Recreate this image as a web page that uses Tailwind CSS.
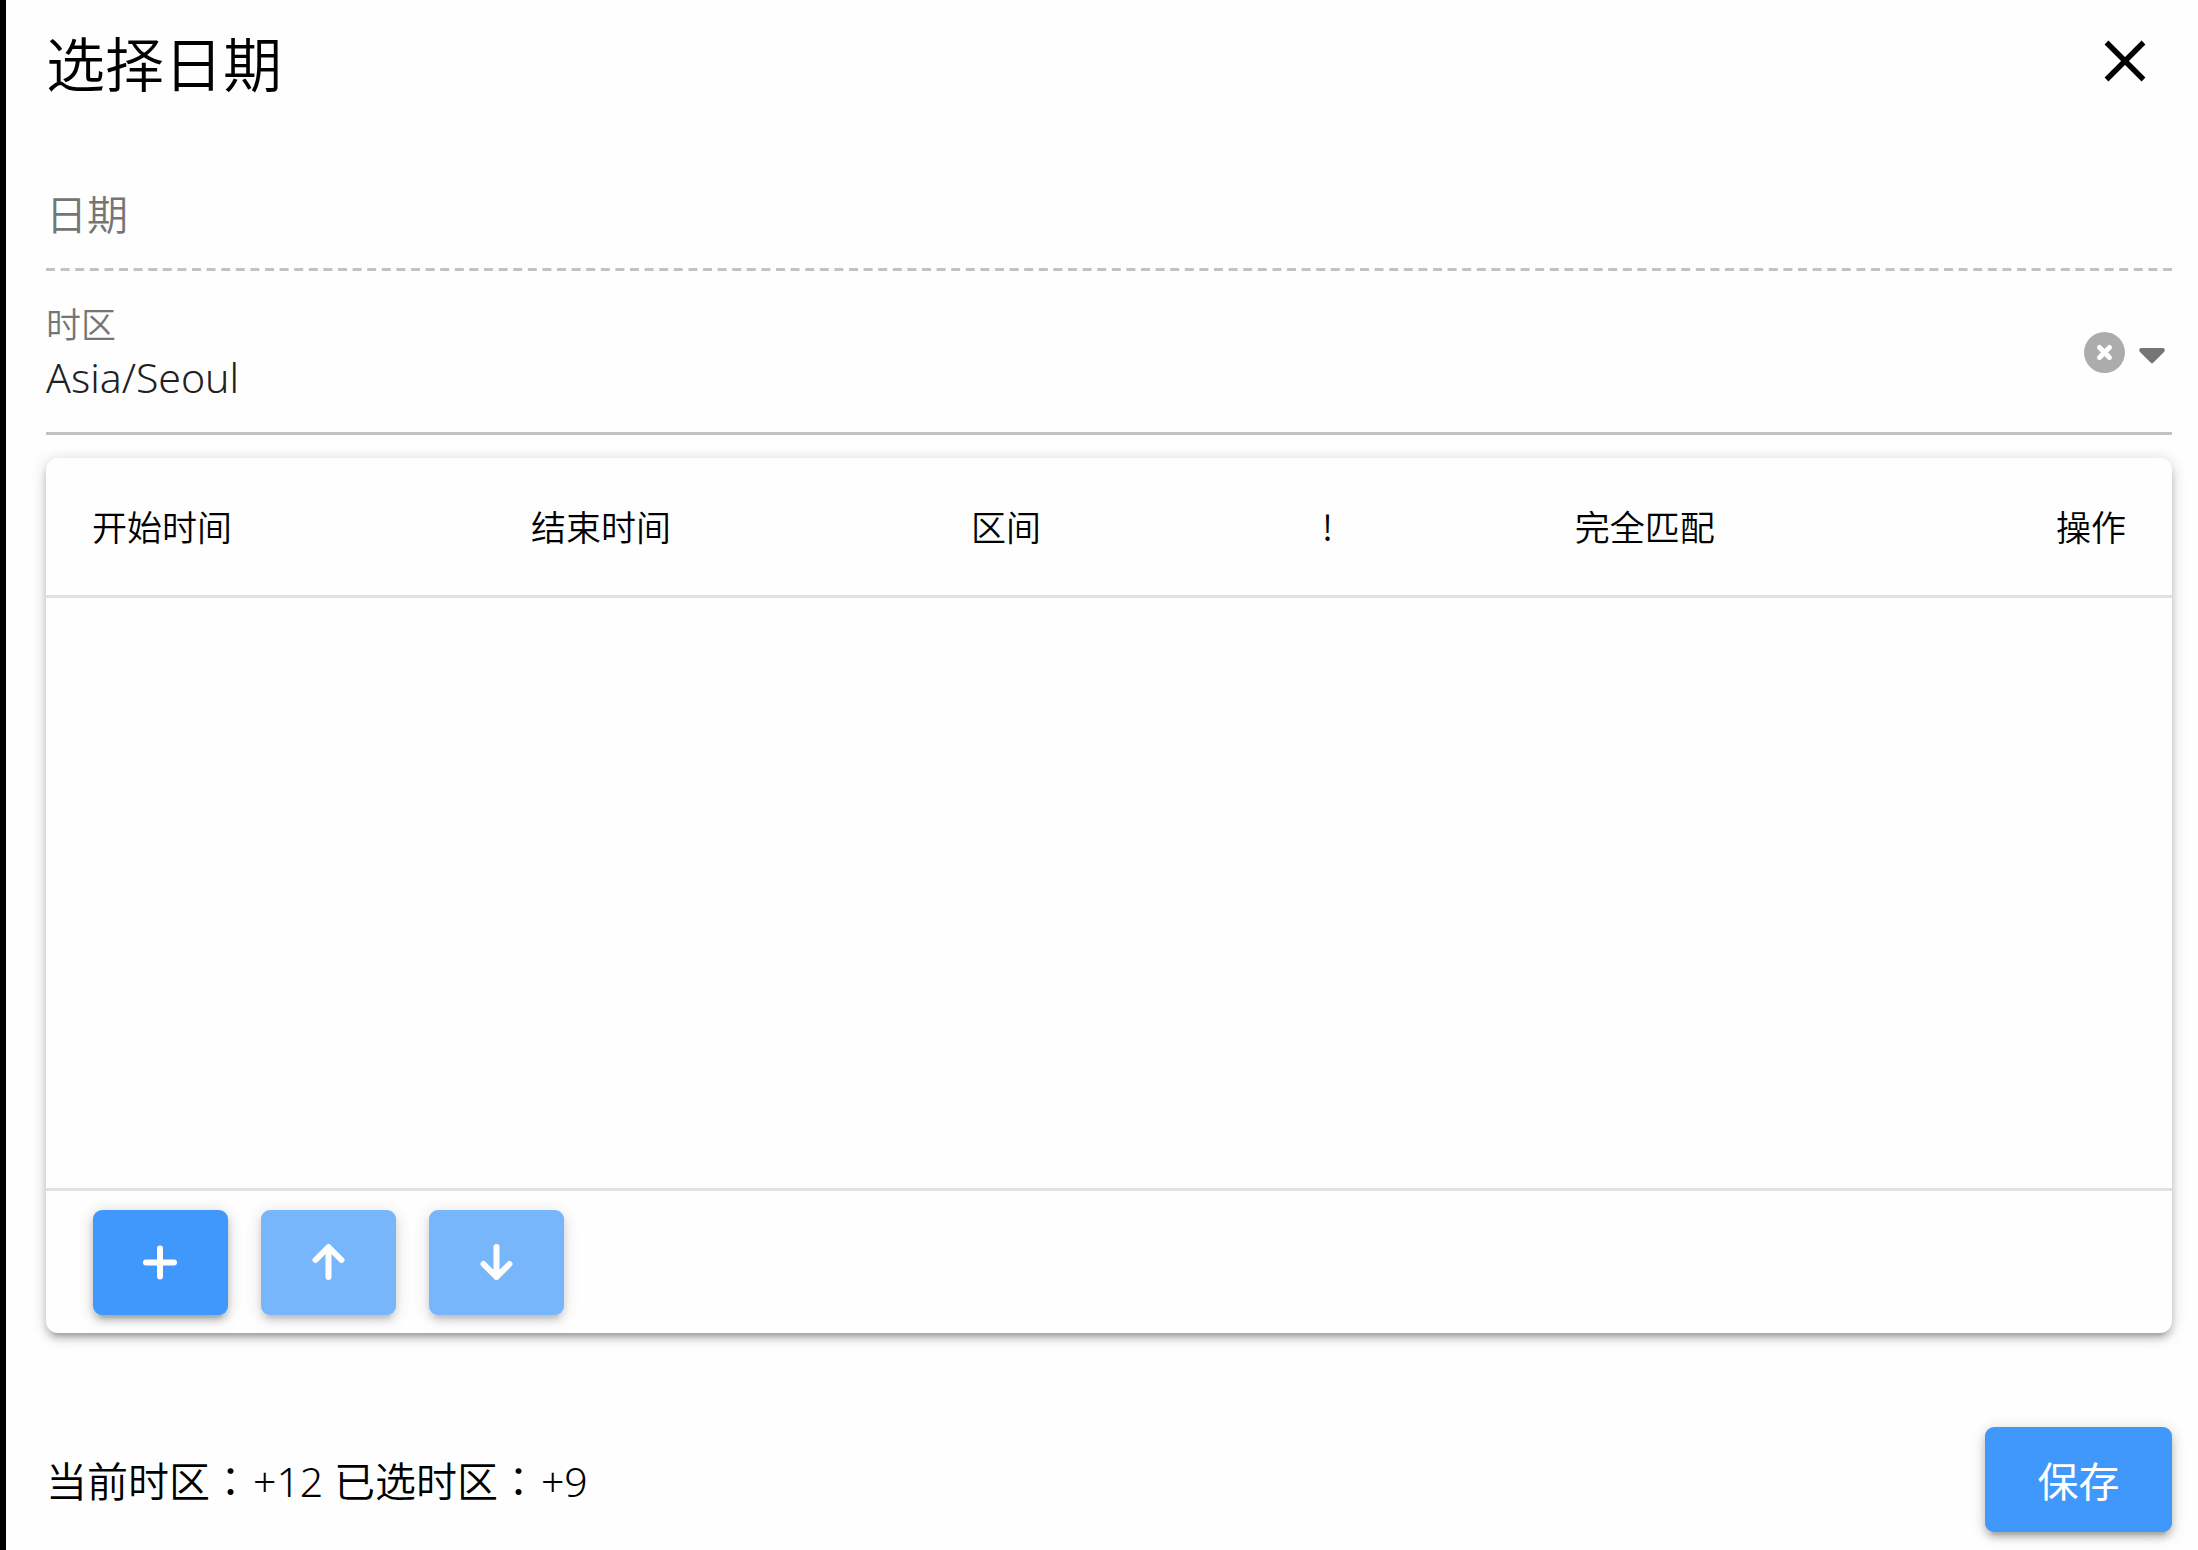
<!DOCTYPE html>
<html lang="zh-CN">
<head>
<meta charset="utf-8">
<title>选择日期</title>
<script src="https://cdn.jsdelivr.net/npm/@tailwindcss/browser@4"></script>
</head>
<body class="bg-black pl-[6px] font-['Noto_Sans','Noto_Sans_CJK_SC',sans-serif] font-[350] text-black">
<main class="flex min-h-screen flex-col bg-[#fefefe] pr-[26px] pb-[18px] pl-10">
  <header class="flex h-32 items-center justify-between">
    <h1 class="mb-1 font-['Noto_Sans_CJK_SC',sans-serif] text-[59px] leading-[80px] font-[350]">选择日期</h1>
    <button type="button" aria-label="关闭" class="mr-[17px] mb-[6px] flex size-[60px] items-center justify-center">
      <svg class="size-[42px]" viewBox="0 0 42 42" fill="none" stroke="currentColor" stroke-width="5.4"><path d="M2.500 2.500 39.500 39.500M39.500 2.500 2.500 39.500"/></svg>
    </button>
  </header>

  <div class="flex h-[140px] items-end pb-[26px] text-[#757575]">
    <label for="date" class="font-['Noto_Sans_CJK_SC',sans-serif] text-[41px] leading-[60px]">日期</label>
    <input id="date" type="text" disabled class="h-[60px] min-w-0 flex-1 bg-transparent px-2 text-[41px]">
  </div>
  <svg class="h-[3px] w-full" aria-hidden="true"><path d="M0 1.500H4000" stroke="#c2c2c2" stroke-width="3" stroke-dasharray="9 5.6"/></svg>

  <div class="flex h-[164px] items-center border-b-[3px] border-[#c2c2c2]">
    <div class="flex flex-1 flex-col pt-1">
      <label for="zone" class="font-['Noto_Sans_CJK_SC',sans-serif] text-[35px] leading-[46px] text-[#757575]">时区</label>
      <select id="zone" class="h-[62px] w-full appearance-none bg-transparent text-[41px] leading-[62px] text-[#212121]"><option>Asia/Seoul</option></select>
    </div>
    <button type="button" aria-label="清除" class="mt-[2px] mr-[14px] size-[41px]">
      <svg class="size-[41px]" viewBox="0 0 41 41"><circle cx="20.500" cy="20.500" r="20.500" fill="#acacac"/><path d="M15.500 15.500l10 10M25.500 15.500l-10 10" stroke="#fff" stroke-width="5" stroke-linecap="round"/></svg>
    </button>
    <svg class="mt-2 mr-[7px] h-4 w-[26px]" viewBox="0 0 26 16" aria-hidden="true"><path d="M2 0H24Q27 1 25 4L14.500 14.500Q13 16 11.500 14.500L1 4Q-1 1 2 0Z" fill="#757575"/></svg>
  </div>

  <section class="mt-[23px] flex flex-1 flex-col rounded-[12px] bg-[#fefefe] shadow-[0_3px_15px_rgba(0,0,0,0.2),0_6px_6px_rgba(0,0,0,0.14),0_9px_3px_-6px_rgba(0,0,0,0.12)]">
    <div class="flex-1">
      <table class="w-full table-fixed border-b-[3px] border-[#e1e1e1] font-['Noto_Sans_CJK_SC',sans-serif] text-[35px] leading-[50px]">
        <thead>
          <tr class="h-[138px] text-left">
            <th class="w-[20.65%] pl-[46px] font-[350]">开始时间</th>
            <th class="w-[20.7%] pl-[46px] font-[350]">结束时间</th>
            <th class="w-[16.5%] pl-[46px] font-[350]">区间</th>
            <th class="w-[11.9%] pl-[46px] font-[350]">!</th>
            <th class="pl-[46px] font-[350]">完全匹配</th>
            <th class="pr-[46px] text-right font-[350]">操作</th>
          </tr>
        </thead>
        <tbody></tbody>
      </table>
    </div>
    <div class="flex gap-[33px] border-t-[3px] border-[#e1e1e1] px-[47px] pt-[19px] pb-[18px]">
      <button type="button" aria-label="添加" class="flex h-[105px] w-[135px] items-center justify-center rounded-[9px] bg-[#4098fc] text-white shadow-[0_3px_15px_rgba(0,0,0,0.2),0_6px_6px_rgba(0,0,0,0.14),0_9px_3px_-6px_rgba(0,0,0,0.12)]">
        <svg class="size-[40px]" viewBox="0 0 40 40" fill="none" stroke="currentColor" stroke-width="6" stroke-linecap="round"><path d="M19 5.500V33.500M5 19.500H33"/></svg>
      </button>
      <button type="button" disabled aria-label="上移" class="flex h-[105px] w-[135px] items-center justify-center rounded-[9px] bg-[#4098fc] text-white opacity-70 shadow-[0_3px_15px_rgba(0,0,0,0.2),0_6px_6px_rgba(0,0,0,0.14),0_9px_3px_-6px_rgba(0,0,0,0.12)]">
        <svg class="size-[40px]" viewBox="0 0 40 40" fill="none" stroke="currentColor" stroke-width="6" stroke-linecap="round" stroke-linejoin="round"><path d="M19.500 34V5M6.500 17 19.500 4 32.500 17"/></svg>
      </button>
      <button type="button" disabled aria-label="下移" class="flex h-[105px] w-[135px] items-center justify-center rounded-[9px] bg-[#4098fc] text-white opacity-70 shadow-[0_3px_15px_rgba(0,0,0,0.2),0_6px_6px_rgba(0,0,0,0.14),0_9px_3px_-6px_rgba(0,0,0,0.12)]">
        <svg class="size-[40px]" viewBox="0 0 40 40" fill="none" stroke="currentColor" stroke-width="6" stroke-linecap="round" stroke-linejoin="round"><path d="M19.500 4V34M6.500 21 19.500 34 32.500 21"/></svg>
      </button>
    </div>
  </section>

  <footer class="mt-[94px] flex h-[105px] items-center justify-between">
    <p class="text-[41px] leading-[60px]">当前时区<span lang="zh-TW" class="mr-[2px] font-['Noto_Sans_CJK_TC',sans-serif]">：</span>+12 已选时区<span lang="zh-TW" class="mr-[2px] font-['Noto_Sans_CJK_TC',sans-serif]">：</span>+9</p>
    <button type="button" class="h-[105px] w-[187px] rounded-[9px] bg-[#4098fc] font-['Noto_Sans_CJK_SC',sans-serif] text-[41px] font-normal text-white shadow-[0_3px_15px_rgba(0,0,0,0.2),0_6px_6px_rgba(0,0,0,0.14),0_9px_3px_-6px_rgba(0,0,0,0.12)]">保存</button>
  </footer>
</main>
</body>
</html>
